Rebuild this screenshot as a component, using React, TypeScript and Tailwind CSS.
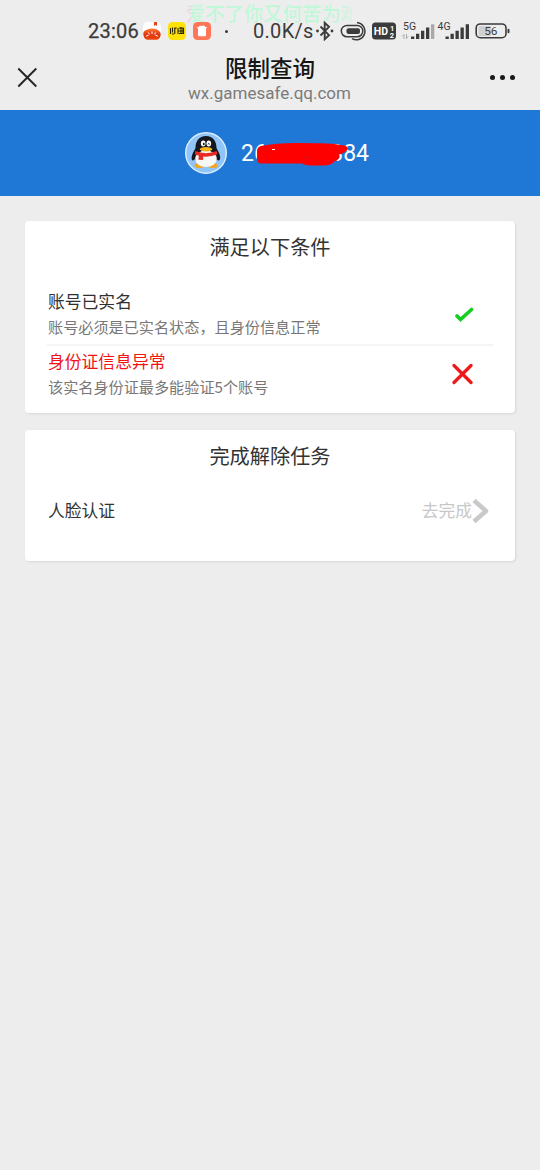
import React from "react";

function StatusBar() {
  return (
    <div className="relative flex h-[50px] items-start text-[#3b3b3b]">
      <div className="absolute left-[186px] top-0 w-[166px] overflow-hidden whitespace-nowrap bg-[linear-gradient(90deg,#efd3e6_0px,#efd3e6_4px,#bdf8d7_6px,#bdf8d7_150px,#e0efe6_166px)] bg-clip-text text-[19.4px] leading-[25px] font-medium text-transparent">
        爱不了你又何苦为难
      </div>
      <div className="relative flex h-[24px] w-full items-center pl-[88px] mt-[19px]">
        <span className="w-[52px] whitespace-nowrap font-[Roboto,sans-serif] text-[20px] leading-none tracking-[0.25px] [-webkit-text-stroke:0.25px_#3b3b3b]">23:06</span>
        <svg className="ml-[3px] h-[18px] w-[18px]" viewBox="0 0 18 18">
          <defs>
            <linearGradient id="mitten" x1="0" y1="0" x2="0" y2="1">
              <stop offset="0" stopColor="#ff7b32" />
              <stop offset="0.5" stopColor="#e33610" />
              <stop offset="1" stopColor="#e8460e" />
            </linearGradient>
          </defs>
          <rect width="18" height="18" rx="5" fill="#fff" />
          <path d="M.3 12C0 9 3.500 7 9 6.500c5 .3 8.900 2.500 8.700 6-.1 3-1.700 5.300-5 5.300H5c-3 0-4.500-2.500-4.700-5.800Z" fill="url(#mitten)" />
          <path d="M11 0h3v4l-1.500-1L11 4Z" fill="#e6441c" />
          <path d="m3.500 14 1.800-.8M5.500 10.800l1 1.300M9 10v1.500M12.500 10.800l-1 1.300M14.500 14l-1.800-.8" stroke="#fff" strokeLinecap="round" />
        </svg>
        <svg className="ml-[7px] h-[18px] w-[18px]" viewBox="0 0 18 18">
          <rect width="18" height="18" rx="4.500" fill="#ffe20a" />
          <path d="M2.500 6v6M4.500 5.500v5M4 12h2M6.800 6v6M8.700 6h-2v5M10 6v6M11 6h4v5.500h-4M13 5v7M10.500 9h5M15.500 6v6" stroke="#292600" strokeWidth="1.100" fill="none" />
        </svg>
        <svg className="ml-[7px] h-[18px] w-[18px]" viewBox="0 0 18 18">
          <rect width="18" height="18" rx="4.500" fill="#ff7657" />
          <path d="M6.500 3.800h5l.6 1.200h1.700v1.300H4.200V5h1.700Z" fill="#fff" />
          <path d="M5 6.100h8v7q0 1.200-1.200 1.200H6.200Q5 14.300 5 13.100Z" fill="#fff" />
        </svg>
        <i className="ml-[14px] h-[3px] w-[3px] rounded-full bg-[#3b3b3b]" />
        <span className="ml-[25px] w-[61px] whitespace-nowrap font-[Roboto,sans-serif] text-[20px] leading-none tracking-[0.3px]">0.0K/s</span>
        <svg className="ml-[1px] h-[20px] w-[20px]" viewBox="0 0 20 20">
          <path d="m5.500 5.500 8.500 8.700-4.300 4V1.800l4.300 4-8.500 8.700" fill="none" stroke="#3b3b3b" strokeWidth="1.900" />
          <circle cx="2.500" cy="10" r="1.400" fill="#3b3b3b" />
          <circle cx="17" cy="10" r="1.400" fill="#3b3b3b" />
        </svg>
        <svg className="ml-[5px] h-[20px] w-[28px]" viewBox="0 0 28 20" fill="none" stroke="#3b3b3b">
          <rect x="1.300" y="4.400" width="21.500" height="11.400" rx="5.700" strokeWidth="1.500" />
          <rect x="6.500" y="7.200" width="13.500" height="5.800" rx="2" fill="#3b3b3b" stroke="none" />
          <path d="M17 1.600a8.600 8.600 0 1 1-5 16" strokeWidth="1.500" />
        </svg>
        <svg className="ml-[4px] h-[18px] w-[24px] overflow-visible" viewBox="0 0 24 18">
          <rect y=".5" width="24" height="17" rx="3.500" fill="#3b3b3b" />
          <text x="1.800" y="12.800" fill="#fff" fontSize="10.500" fontWeight="700" fontFamily="Roboto, sans-serif">HD</text>
          <text x="18" y="8.600" fill="#fff" fontSize="7.500" fontWeight="700" fontFamily="Roboto, sans-serif">1</text>
          <text x="17.800" y="15.700" fill="#fff" fontSize="7.500" fontWeight="700" fontFamily="Roboto, sans-serif">2</text>
        </svg>
        <svg className="ml-[5px] h-[20px] w-[34px] overflow-visible" viewBox="0 0 34 20">
          <text x="2" y="9" fill="#3b3b3b" fontSize="10.500" fontFamily="Roboto, sans-serif">5G</text>
          <path d="M3 18v-4.500L1 15.500M5.500 13v4.500l1.700-2" stroke="#aaa" fill="none" />
          <path d="M10 15.500h3.300V18H10ZM15 12.700h3.300V18H15ZM20 9.800h3.300V18H20ZM25 6.500h3.300V18H25Z" fill="#3b3b3b" />
          <path d="M30 3.300h3.300V18H30Z" fill="#a9a9a9" />
        </svg>
        <svg className="ml-[2px] h-[20px] w-[32px] overflow-visible" viewBox="0 0 32 20">
          <text x=".5" y="9" fill="#3b3b3b" fontSize="10.500" fontFamily="Roboto, sans-serif">4G</text>
          <path d="M8.500 15.500h3.300V18H8.500ZM13.500 12.700h3.300V18h-3.300ZM18.500 9.800h3.300V18h-3.300ZM23.500 6.500h3.300V18h-3.300ZM28.700 3.300H32V18h-3.300Z" fill="#3b3b3b" />
        </svg>
        <svg className="ml-[6px] h-[18px] w-[36px]" viewBox="0 0 36 18">
          <path d="M5 4h11v10H5q-1.500 0-1.500-1.500v-7Q3.500 4 5 4" fill="#d0d0d0" />
          <rect x="1.200" y="2" width="29.800" height="13.700" rx="4" fill="none" stroke="#3b3b3b" strokeWidth="1.600" />
          <rect x="32.500" y="6.700" width="2" height="4.500" rx="1" fill="#3b3b3b" />
          <text x="9.200" y="13" fill="#3b3b3b" fontSize="11.800" fontFamily="Roboto, sans-serif">56</text>
        </svg>
      </div>
    </div>
  );
}

function TitleBar() {
  return (
    <header className="grid h-[60px] grid-cols-[80px_1fr_80px]">
      <svg className="ml-[17px] mt-[17px] h-[21px] w-[21px]" viewBox="0 0 21 21">
        <path d="m1.300 1.500 18 18M19.300 1.500l-18 18" stroke="#242424" strokeWidth="1.900" />
      </svg>
      <div className="flex flex-col items-center">
        <h1 className="pt-[1px] text-[22.500px] leading-[32px] font-medium text-[#161616]">限制查询</h1>
        <p className="whitespace-nowrap pr-[1px] font-[Roboto,sans-serif] text-[17px] leading-[20px] text-[#7b7b7b]">wx.gamesafe.qq.com</p>
      </div>
      <div className="mr-[25px] mt-[25px] flex justify-end gap-[5px]">
        <i className="h-[5px] w-[5px] rounded-full bg-[#181818]" />
        <i className="h-[5px] w-[5px] rounded-full bg-[#181818]" />
        <i className="h-[5px] w-[5px] rounded-full bg-[#181818]" />
      </div>
    </header>
  );
}

function Penguin() {
  return (
    <svg className="h-[42px] w-[42px]" viewBox="0 0 42 42">
      <circle cx="21" cy="21" r="20.300" fill="#91c5fa" stroke="#dceeff" strokeWidth="1.400" />
      <ellipse cx="14.500" cy="33.500" rx="5" ry="2.500" fill="#f5a51b" />
      <ellipse cx="27.500" cy="33.500" rx="5" ry="2.500" fill="#f5a51b" />
      <path d="M11 16c-4 5-5.500 11-3.500 12.500 1 .3 3-2 4-4M31 16c4 5 5.500 11 3 12.500-1 .3-3-2-4-4" fill="#161820" />
      <path d="M21 4C14 4 10.500 9 10.500 16 7 24 10 33 21 33s14-9 10.500-17C31.500 9 28 4 21 4Z" fill="#161820" />
      <ellipse cx="21" cy="26.800" rx="10.800" ry="8.300" fill="#f7f7f5" />
      <ellipse cx="18.200" cy="11.500" rx="2.300" ry="3" fill="#fff" />
      <ellipse cx="23.800" cy="11.500" rx="2.300" ry="3" fill="#fff" />
      <ellipse cx="18.800" cy="12" rx=".9" ry="1.300" fill="#111" />
      <path d="M22.800 12.300q1-1.600 2 0" fill="none" stroke="#111" />
      <ellipse cx="21" cy="17.300" rx="6.300" ry="2.200" fill="#f7b41b" />
      <path d="M10.200 19q11 4.300 21.500 0l.8 3.300q-7 3-14.200 2.300l-.3 3.400-4.500-.2.300-4.100-3.800-1.500Z" fill="#e82a22" />
    </svg>
  );
}

function AccountBanner() {
  return (
    <section className="flex h-[86px] items-center bg-[#1f78d5] pl-[185px]">
      <Penguin />
      <div className="relative ml-[14px] w-[128px] font-[Roboto,sans-serif] text-[23px] leading-[30px] text-white">
        <div className="flex justify-between pt-[1px]"><span>26</span><span>384</span></div>
        <svg className="absolute left-[15px] top-[4px] h-[24px] w-[94px]" viewBox="0 0 94 24">
          <path d="M5 4Q20 1 40 1l22 .3Q75 1 88 3.500q5 1 3.500 4Q89 11 83 12.500q1 6-5 7-2 4-11 4H54q-5 0-8-2H7Q1 22 1 17V9q0-4 4-5Z" fill="red" />
          <path d="M16 7.500h3" stroke="#fff" strokeWidth="1" />
          <path d="M49 15.500h2" stroke="#8d2658" strokeWidth="1" />
        </svg>
      </div>
    </section>
  );
}

type ConditionProps = { title: string; detail: string; failed?: boolean };

function Condition({ title, detail, failed = false }: ConditionProps) {
  return (
    <div className="flex items-center justify-between pl-[1px] pr-[18px]">
      <div>
        <h3 className={failed ? "text-[16.800px] leading-[26px] text-[#f01414]" : "text-[16.800px] leading-[26px] text-[#303030]"}>{title}</h3>
        <p className="text-[15.150px] leading-[24px] text-[#777]">{detail}</p>
      </div>
      {failed ? (
        <svg className="mr-[2px] mt-[2px] h-[22px] w-[22px]" viewBox="0 0 22 22">
          <path d="m3 2.500 17 17M20 2.500l-17 17" stroke="#f01818" strokeWidth="3.200" strokeLinecap="round" />
        </svg>
      ) : (
        <svg className="mr-[1px] mt-[3px] h-[18px] w-[20px]" viewBox="0 0 20 18">
          <path d="m3 10 3.500 3.500L17.500 3.500" fill="none" stroke="#15cf20" strokeWidth="3.600" strokeLinecap="round" />
        </svg>
      )}
    </div>
  );
}

export default function App() {
  return (
    <div className="min-h-[1170px] w-[540px] bg-[#ededed] font-['Noto_Sans_CJK_SC',sans-serif]">
      <StatusBar />
      <TitleBar />
      <AccountBanner />
      <main className="flex flex-col gap-[17px] px-[25px] pt-[25px]">
        <section className="h-[192px] rounded-[4px] bg-white px-[22px] shadow-[1px_1px_2px_#d5d9dd]">
          <h2 className="pt-[10px] text-center text-[20.200px] leading-[32px] text-[#333]">满足以下条件</h2>
          <div className="mt-[25px] h-[56px]">
            <Condition title="账号已实名" detail="账号必须是已实名状态，且身份信息正常" />
          </div>
          <div className="h-[2px] bg-[#f5f5f5]" />
          <div className="mt-[2px]">
            <Condition title="身份证信息异常" detail="该实名身份证最多能验证5个账号" failed />
          </div>
        </section>
        <section className="h-[131px] rounded-[4px] bg-white px-[22px] shadow-[1px_1px_2px_#d5d9dd]">
          <h2 className="pt-[10px] text-center text-[20.200px] leading-[32px] text-[#333]">完成解除任务</h2>
          <div className="mt-[25px] flex h-[28px] items-center justify-between pl-[1px] pr-[4px] text-[16.800px]">
            <span className="text-[#333]">人脸认证</span>
            <div className="flex items-center text-[#c8c8c8]">
              <span>去完成</span>
              <svg className="h-[26px] w-[17px]" viewBox="0 0 17 26">
                <path d="m2 2.500 12 10.500L2 23.500" fill="none" stroke="#c9c9c9" strokeWidth="4.500" strokeLinejoin="round" />
              </svg>
            </div>
          </div>
        </section>
      </main>
    </div>
  );
}
